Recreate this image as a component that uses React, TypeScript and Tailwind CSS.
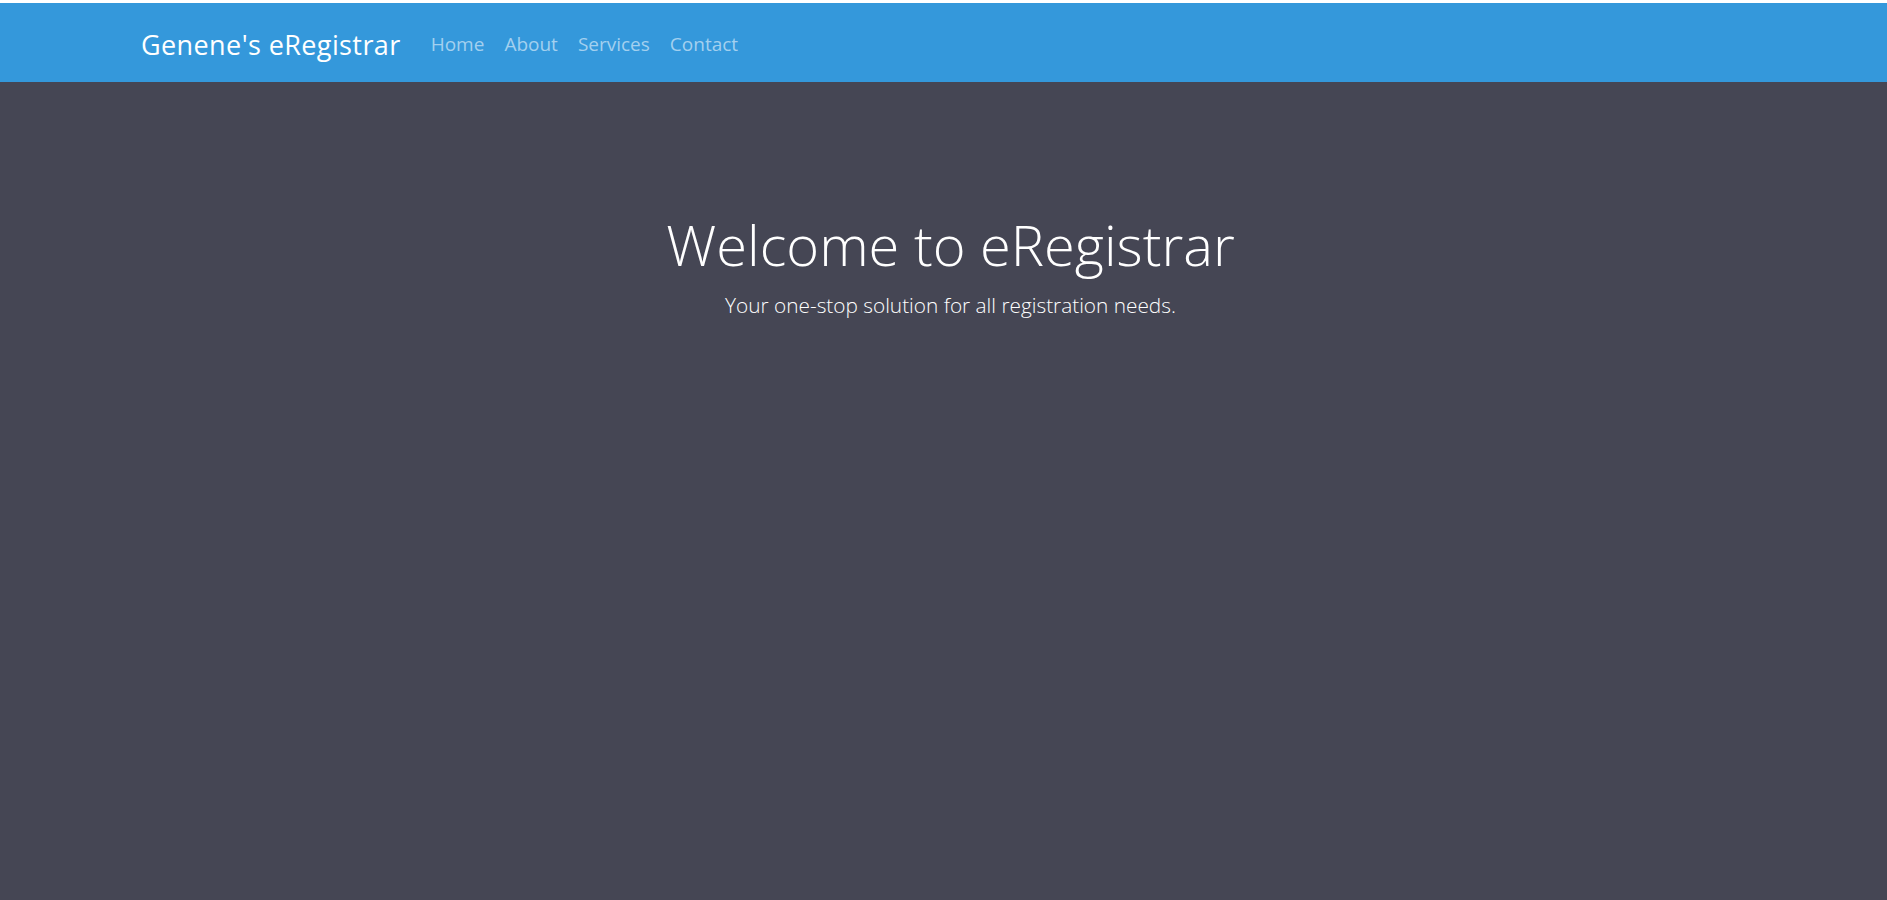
import React from "react";

const links = ["Home", "About", "Services", "Contact"];

export default function App() {
  return (
    <div className="min-h-screen flex flex-col bg-white font-['Open_Sans',sans-serif]">
      <div className="h-[3px] bg-white" />
      <nav className="h-[79px] bg-[#3498db]">
        <div className="mx-auto w-[1605px] h-full flex items-center pt-[3px]">
          <a href="#" className="text-[27px] tracking-[0.4px] text-white mr-[20px] leading-none">
            Genene's eRegistrar
          </a>
          <ul className="flex items-center pt-[2px]">
            {links.map((l) => (
              <li key={l}>
                <a href="#" className="px-[10px] text-[19px] text-[#a3d0ef] leading-none">
                  {l}
                </a>
              </li>
            ))}
          </ul>
        </div>
      </nav>
      <main className="flex-1 bg-[#454654] text-white text-center pt-[129px] pl-[14px]">
        <h1 className="text-[56px] font-light leading-[1.2] mb-[12px]">
          Welcome to eRegistrar
        </h1>
        <p className="text-[20.8px] font-light leading-[1.5]">
          Your one-stop solution for all registration needs.
        </p>
      </main>
    </div>
  );
}
